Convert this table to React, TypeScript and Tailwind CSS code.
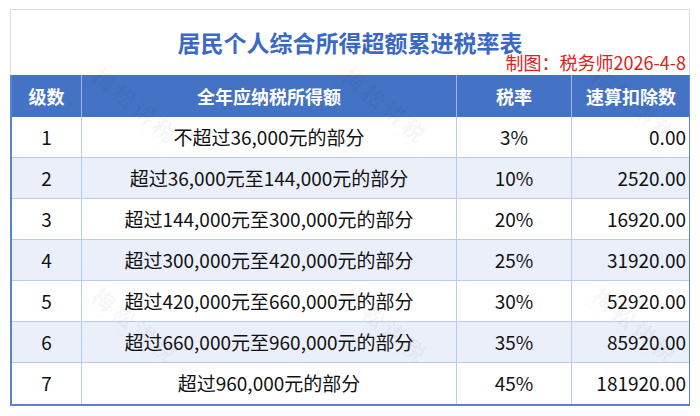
import React from 'react';

const rows: [string, string, string, string][] = [
  ['1', '不超过36,000元的部分', '3%', '0.00'],
  ['2', '超过36,000元至144,000元的部分', '10%', '2520.00'],
  ['3', '超过144,000元至300,000元的部分', '20%', '16920.00'],
  ['4', '超过300,000元至420,000元的部分', '25%', '31920.00'],
  ['5', '超过420,000元至660,000元的部分', '30%', '52920.00'],
  ['6', '超过660,000元至960,000元的部分', '35%', '85920.00'],
  ['7', '超过960,000元的部分', '45%', '181920.00'],
];

const marks = [
  { x: 78, y: 92 },
  { x: 328, y: 92 },
  { x: 578, y: 92 },
  { x: 78, y: 312 },
  { x: 328, y: 312 },
  { x: 578, y: 312 },
];

const Watermark: React.FC<{ x: number; y: number }> = ({ x, y }) => (
  <div
    className="absolute pointer-events-none flex flex-col items-center rotate-[40deg] text-[#000]/[0.05]"
    style={{ left: x, top: y }}
  >
    <span className="text-[22px] leading-[24px] font-bold tracking-[4px]">梅松讲税</span>
    <span className="text-[7px] leading-[9px] tracking-[1px]">Meisong Talks About Taxes</span>
  </div>
);

export default function App() {
  return (
    <div className="relative w-[700px] h-[416px] bg-white pt-[9px] pl-[10px] font-['Noto_Sans_CJK_SC',sans-serif] text-[#111]">
      <div className="w-[680px]">
        <div className="h-[66px] border-t border-l border-r border-[#dcdcdc] pt-[16px] flex flex-col">
          <div className="h-[32px] leading-[32px] text-center text-[23px] font-bold text-[#3a68c6]">
            居民个人综合所得超额累进税率表
          </div>
          <div className="-mt-[6px] pr-[3px] text-right text-[18px] leading-[20px] text-[#e02020]">
            制图：税务师2026-4-8
          </div>
        </div>
        <div className="border-l-2 border-r border-b-2 border-[#5b82d0]">
          <div className="grid grid-cols-[70px_375px_115px_118px] h-[42px] bg-[#4472c4] text-white font-bold text-[18px]">
            <div className="flex items-center justify-center border-r border-[#9fb6e4]">级数</div>
            <div className="flex items-center justify-center border-r border-[#9fb6e4]">全年应纳税所得额</div>
            <div className="flex items-center justify-center border-r border-[#9fb6e4]">税率</div>
            <div className="flex items-center justify-center">速算扣除数</div>
          </div>
          {rows.map((r, i) => (
            <div
              key={r[0]}
              className={`grid grid-cols-[70px_375px_115px_118px] h-[41px] text-[19px] ${i < rows.length - 1 ? 'border-b' : ''} border-[#b9cbeb] ${i % 2 === 1 ? 'bg-[#eaeff9]' : 'bg-white'}`}
            >
              <div className="flex items-center justify-center border-r border-[#b9cbeb]">{r[0]}</div>
              <div className="flex items-center justify-center border-r border-[#b9cbeb]">{r[1]}</div>
              <div className="flex items-center justify-center border-r border-[#b9cbeb]">{r[2]}</div>
              <div className="flex items-center justify-end pr-[4px]">{r[3]}</div>
            </div>
          ))}
        </div>
      </div>
      {marks.map((m, i) => (
        <Watermark key={i} x={m.x} y={m.y} />
      ))}
    </div>
  );
}
